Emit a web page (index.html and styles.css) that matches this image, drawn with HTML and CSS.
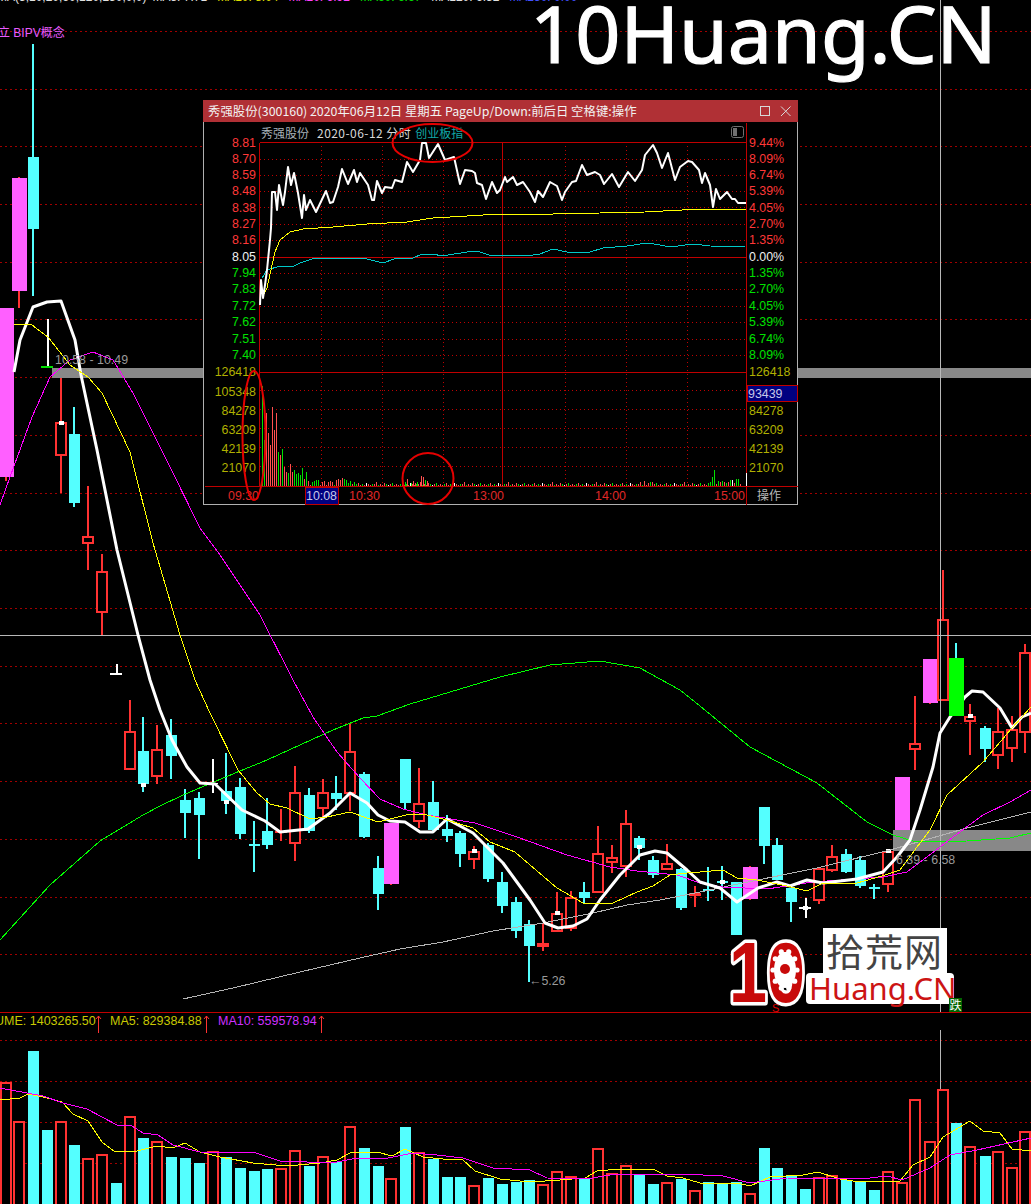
FILE: index.html
```html
<!DOCTYPE html>
<html lang="zh-CN">
<head>
<meta charset="utf-8">
<title>10Huang.CN K线</title>
<link rel="stylesheet" href="styles.css">
</head>
<body>
<main class="stage">
  <svg id="main" class="chart" viewBox="0 0 1031 1204" width="1031" height="1204">
    <g id="mainGrid"></g>
    <rect class="band" x="52" y="368" width="979" height="10"></rect>
    <g id="candlesA"></g>
    <rect class="band" x="893" y="830" width="138" height="21"></rect>
    <line class="cross" x1="0" y1="635.5" x2="1031" y2="635.5"></line>
    <line class="cross" x1="940.5" y1="0" x2="940.5" y2="1012"></line>
    <line class="cross" x1="940.5" y1="1030" x2="940.5" y2="1204"></line>
    <g id="lines"></g>
    <g id="candlesB"></g>
    <g id="volBars"></g>
    <g id="volLines"></g>
    <line class="divider" x1="0" y1="1012.5" x2="1031" y2="1012.5"></line>

    <text class="t-top" x="-3" y="1"><tspan class="tc-w">MA(5,10,20,60,120,250,0,0)</tspan><tspan class="tc-w" dx="6">MA5: 7.71</tspan><tspan class="tc-y" dx="10">MA10: 8.04</tspan><tspan class="tc-m" dx="10">MA20: 6.92</tspan><tspan class="tc-g" dx="10">MA60: 6.67</tspan><tspan class="tc-w" dx="10">MA120: 6.52</tspan><tspan class="tc-b" dx="10">MA250: 0.00</tspan></text>
    <text class="t-concept" x="-2" y="37">立 BIPV概念</text>
    <text class="t-note" x="55" y="364">10.58 - 10.49</text>
    <text class="t-note" x="896" y="864">6.39 - 6.58</text>
    <text class="t-note" x="529" y="985">←5.26</text>

    <text class="t-vol tc-ol" x="-5" y="1025">UME: 1403265.50</text>
    <text class="t-vol tc-ol" x="110" y="1025">MA5: 829384.88</text>
    <text class="t-vol tc-p" x="218" y="1025">MA10: 559578.94</text>
    <path class="arrow" d="M98.5 1033V1016M96 1019l2.5-3 2.5 3M206.5 1033V1016M204 1019l2.5-3 2.5 3M321.5 1033V1016M319 1019l2.5-3 2.5 3"></path>

    <text class="logo-s" x="772" y="1012">S</text>
    <g class="logo">
      <rect class="logo-bg" x="823" y="928" width="124" height="46"></rect>
      <rect class="logo-bg" x="806" y="973" width="148" height="31" rx="4"></rect>
      <text class="logo-en" x="809" y="1000">Huang.CN</text>
      <text class="logo-cn" x="826" y="966">拾荒网</text>
      <text class="logo-ten" x="729" y="1002" textLength="76" lengthAdjust="spacingAndGlyphs">10</text>
      <ellipse class="gear-bg" cx="785" cy="970" rx="11" ry="18"></ellipse>
      <g id="gear"></g>
      <circle class="gear-dot" cx="785" cy="969" r="5"></circle>
    </g>
    <rect class="fall-bg" x="949" y="998" width="13" height="14"></rect>
    <text class="fall" x="949.5" y="1010">跌</text>
  </svg>

  <div class="brand">10Huang.CN</div>

  <section class="popup">
    <header class="popup-title">
      <span class="popup-title-text">秀强股份(300160) 2020年06月12日 星期五 PageUp/Down:前后日 空格键:操作</span>
      <svg class="win-btns" width="34" height="12" viewBox="0 0 34 12">
        <rect x="0.5" y="1.5" width="9" height="9"></rect>
        <path d="M21 1.5l9.500 9.500M30.500 1.500L21 11"></path>
      </svg>
    </header>
    <div class="popup-body">
      <div class="popup-head">
        <span class="ph-name">秀强股份</span>
        <span class="ph-date">2020-06-12 分时</span>
        <span class="ph-index">创业板指</span>
        <svg class="ph-icon" width="13" height="12" viewBox="0 0 13 12">
          <rect x="0.500" y="0.500" width="12" height="11" rx="2"></rect>
          <rect class="ph-icon-fill" x="2" y="2" width="4" height="8"></rect>
        </svg>
      </div>
      <svg id="mini" class="mini" viewBox="204 142 593 362" width="593" height="362">
        <g id="miniGrid"></g>
        <g id="miniVol"></g>
        <g id="miniLines"></g>
        <rect class="tag-bg" x="747" y="385" width="50" height="16"></rect>
        <rect class="tag-bg" x="305" y="487" width="33" height="17"></rect>
        <g id="miniLabels"></g>
        <text class="m-l tc-vol-sel" x="748" y="397.500">93439</text>
        <text class="m-l tc-sel" x="306" y="499.500">10:08</text>
        <text class="m-l tc-time" x="228" y="499.500">09:30</text>
        <text class="m-l tc-time" x="349" y="499.500">10:30</text>
        <text class="m-l tc-time" x="473" y="499.500">13:00</text>
        <text class="m-l tc-time" x="595" y="499.500">14:00</text>
        <text class="m-l tc-time" x="714" y="499.500">15:00</text>
        <text class="m-l m-cn tc-op" x="757" y="499.500">操作</text>
        <ellipse class="mark" cx="432.500" cy="143" rx="40" ry="19"></ellipse>
        <ellipse class="mark" cx="254" cy="435.500" rx="11.500" ry="64.500"></ellipse>
        <circle class="mark" cx="428" cy="478.500" r="25.500"></circle>
      </svg>
    </div>
  </section>
</main>
<script src="chart.js"></script>
</body>
</html>
```
FILE: styles.css
```css
* { box-sizing: border-box; }
html, body { margin: 0; background: #000; }
body { font-family: "Liberation Sans", "Noto Sans CJK SC", sans-serif; }

.stage { position: relative; width: 1031px; height: 1204px; overflow: hidden; background: #000; }
.chart { display: block; }

.grid { stroke: #a00000; stroke-width: 1; stroke-dasharray: 2 3; shape-rendering: crispEdges; }
.band { fill: #888; shape-rendering: crispEdges; }
.cross { stroke: #b8b8b8; stroke-width: 1; shape-rendering: crispEdges; }
.divider { stroke: #c00000; stroke-width: 1; shape-rendering: crispEdges; }

.up-wick { fill: #ff3232; shape-rendering: crispEdges; }
.up-body { fill: #000; stroke: #ff3232; stroke-width: 2; shape-rendering: crispEdges; }
.up-solid { fill: #ff3232; shape-rendering: crispEdges; }
.dn { fill: #54ffff; shape-rendering: crispEdges; }
.mg { fill: #ff5fff; shape-rendering: crispEdges; }
.gn { fill: #00ff00; shape-rendering: crispEdges; }
.wt { fill: #fff; shape-rendering: crispEdges; }
.gtick { fill: #00e000; shape-rendering: crispEdges; }

.ln { fill: none; stroke-linejoin: round; }
.ln-thin { stroke-width: 1; shape-rendering: crispEdges; }
.ln-white { stroke: #fff; stroke-width: 3; }
.ln-yellow { stroke: #ffff00; }
.ln-mag { stroke: #ff00ff; }
.ln-green { stroke: #00ff00; }
.ln-gray { stroke: #b4b4b4; }
.ln-cyan { stroke: #00c8c8; }
.ln-price { stroke: #fff; stroke-width: 2; }

.t-top { font-size: 12px; }
.t-concept { font-size: 12px; fill: #e85cff; font-family: "Liberation Sans", "Noto Sans CJK SC", sans-serif; }
.t-note { font-size: 12.400px; fill: #9a9a9a; }
.t-vol { font-size: 12.500px; }
.tc-w { fill: #e0e0e0; }
.tc-y { fill: #e0e000; }
.tc-m { fill: #ff40ff; }
.tc-g { fill: #00e000; }
.tc-b { fill: #4050ff; }
.tc-ol { fill: #c8c800; }
.tc-p { fill: #d030ff; }
.arrow { fill: none; stroke: #ff3232; stroke-width: 1; }

.logo-bg { fill: #fff; }
.logo-ten { font-family: "Liberation Sans", sans-serif; font-weight: 700; font-size: 86px; fill: #c80a0a; stroke: #fff; stroke-width: 7; paint-order: stroke; stroke-linejoin: round; }
.gear-bg { fill: #fff; }
.gear-tooth { fill: #fff; }
.gear-dot { fill: #c80a0a; }
.logo-cn { font-family: "Noto Sans CJK SC", sans-serif; font-size: 38px; fill: #444; letter-spacing: 1px; }
.logo-en { font-family: "Noto Sans", sans-serif; font-size: 31px; fill: #cc1414; }
.logo-s { font-size: 11px; fill: #e00000; }
.fall-bg { fill: #006400; shape-rendering: crispEdges; }
.fall { font-family: "Noto Sans CJK SC", sans-serif; font-size: 12px; fill: #fff; }

.brand {
  position: absolute; left: 530px; top: -23px;
  font-family: "Noto Sans", sans-serif; font-size: 79px; line-height: 112px;
  color: #fff; white-space: nowrap; -webkit-text-stroke: 1.200px #fff;
}

.popup { position: absolute; left: 203px; top: 100px; width: 595px; height: 405px; display: flex; flex-direction: column; background: #000; }
.popup-title { display: flex; align-items: center; justify-content: space-between; height: 22px; padding: 0 4px 0 5px; background: #b03035; }
.popup-title-text { font-family: "Noto Sans CJK SC", sans-serif; font-size: 12.400px; color: #f2f2f2; white-space: nowrap; }
.win-btns { display: block; }
.win-btns rect { fill: none; stroke: #d8d8d8; }
.win-btns path { fill: none; stroke: #d8d8d8; }
.popup-body { flex: 1; display: flex; flex-direction: column; border: 1px solid #b0b0b0; border-top: 0; }
.popup-head { display: flex; align-items: center; gap: 4px; height: 20px; padding-left: 57px; padding-right: 53px; font-family: "Noto Sans CJK SC", sans-serif; font-size: 12px; white-space: nowrap; }
.ph-name { color: #a8b0b8; margin-right: 4px; }
.ph-date { color: #d8d8d8; letter-spacing: 0.450px; }
.ph-index { color: #10a8a8; }
.ph-icon { margin-left: auto; }
.ph-icon rect { fill: none; stroke: #707070; }
.ph-icon .ph-icon-fill { fill: #707070; stroke: none; }
.mini { display: block; overflow: visible; }

.m-frame { stroke: #c00000; stroke-width: 1; shape-rendering: crispEdges; }
.m-dot { stroke: #c00000; stroke-width: 1; stroke-dasharray: 1 3; shape-rendering: crispEdges; }
.m-l { font-size: 12.400px; }
.m-cn { font-family: "Noto Sans CJK SC", sans-serif; font-size: 12px; }
.m-red { fill: #ff3838; }
.m-green { fill: #00e000; }
.m-white { fill: #f0f0f0; }
.m-ol { fill: #b0b000; }
.tc-sel, .tc-vol-sel { fill: #c8c8e8; }
.tc-time { fill: #e02828; }
.tc-op { fill: #b8b8b8; }
.tag-bg { fill: #000080; stroke: #c00000; stroke-width: 1; shape-rendering: crispEdges; }
.vr { stroke: #ff5050; stroke-width: 1; shape-rendering: crispEdges; }
.vg { stroke: #00e000; stroke-width: 1; shape-rendering: crispEdges; }
.vw { stroke: #fff; stroke-width: 1; shape-rendering: crispEdges; }
.mark { fill: none; stroke: #e60000; stroke-width: 2; }
```
FILE: chart.js
```javascript
var NS = "http://www.w3.org/2000/svg";
function el(parent, tag, attrs) {
  var n = document.createElementNS(NS, tag);
  for (var k in attrs) n.setAttribute(k, attrs[k]);
  parent.appendChild(n);
  return n;
}
function box(g, cls, x, y, w, h) { el(g, "rect", { "class": cls, x: x, y: y, width: w, height: h }); }
function poly(g, cls, pts) {
  el(g, "polyline", { "class": "ln " + cls, points: pts.map(function (p) { return p[0] + "," + p[1]; }).join(" ") });
}
function $(id) { return document.getElementById(id); }

/* main grid */
[31,89,146,204,262,319,377,435,493,550,608,666,723,781,839,897,954,1040,1081,1122,1163].forEach(function (y) {
  el($("mainGrid"), "line", { "class": "grid", x1: 0, x2: 1031, y1: y + 0.5, y2: y + 0.5 });
});

/* candles: x, wickTop, wickBottom, bodyTop, bodyBottom, type, whiteSquareY */
var candles = [
 [6,308,481,308,477,"m"],[19,177,308,178,291,"m"],[33,44,296,157,229,"c"],
 [47,319,367,366,368,"w"],[61,378,493,422,455,"r",423],[74,407,507,434,503,"c"],
 [88,486,570,536,543,"r"],[102,554,635,571,612,"r"],[116,664,674,673,675,"w"],
 [130,700,770,731,769,"r"],[143,717,792,751,784,"c",785],[157,725,784,749,776,"r"],
 [171,719,779,735,756,"c"],[185,789,838,800,813,"c"],[199,792,859,798,815,"c"],
 [212,759,793,783,784,"w"],[226,753,814,791,801,"c",802],[240,778,839,787,834,"c"],
 [254,821,872,844,846,"c"],[267,798,849,831,845,"c"],[281,809,841,831,833,"R"],
 [295,766,861,792,843,"r"],[309,788,833,795,831,"c"],[323,779,818,792,808,"r"],
 [336,776,810,793,799,"c"],[350,724,811,751,793,"r"],[364,772,838,774,837,"c"],
 [378,856,910,868,894,"c"],[391,823,885,823,884,"m"],[405,759,810,759,803,"c"],
 [419,768,828,803,821,"r"],[433,781,832,802,830,"c"],[447,815,842,829,836,"c"],
 [460,831,867,833,854,"c"],[474,846,869,851,859,"r",851],[488,843,882,845,879,"c"],
 [502,872,913,882,906,"c"],[516,897,938,902,931,"c"],[529,920,982,924,946,"c"],
 [543,923,951,943,947,"R"],[557,892,932,913,931,"r",913],[571,891,931,897,928,"r"],
 [584,882,904,892,898,"c"],[598,826,893,853,892,"r"],[612,845,873,857,862,"r"],
 [626,810,877,823,866,"r"],[639,836,860,838,848,"c",847],[653,856,878,860,875,"c"],
 [667,844,870,863,869,"r"],[681,868,910,869,908,"c"],[695,886,907,893,896,"R"],
 [708,867,901,889,891,"c"],[722,866,900,881,883,"c",882],[736,882,935,882,935,"c"],
 [750,866,900,867,899,"m"],[764,807,864,807,846,"c"],[777,838,880,845,880,"c"],
 [791,888,922,888,902,"c"],[805,898,918,907,909,"w",908],[819,868,904,868,900,"r"],
 [832,845,872,856,870,"r"],[846,849,873,854,872,"c"],[860,856,888,860,886,"c"],
 [874,884,899,887,889,"c"],[888,850,892,851,884,"r",851],[902,777,851,777,851,"m"],
 [915,696,770,743,749,"r"],[930,659,704,659,703,"m"],[943,570,700,619,700,"r"],
 [970,704,755,716,721,"r",716],[985,726,762,728,749,"c"],[998,708,769,731,755,"r"],
 [1012,716,762,729,748,"r"],[1025,644,753,652,732,"r"]
];
function candle(g, c) {
  var x = c[0], t = c[5];
  if (t === "r") {
    box(g, "up-wick", x - 1, c[1], 2, c[3] - c[1]);
    box(g, "up-wick", x - 1, c[4], 2, c[2] - c[4]);
    box(g, "up-body", x - 5, c[3] + 1, 10, c[4] - c[3] - 1);
  } else if (t === "R") {
    box(g, "up-wick", x - 1, c[1], 2, c[2] - c[1]);
    box(g, "up-solid", x - 6, c[3], 12, c[4] - c[3]);
  } else if (t === "m") {
    box(g, "up-wick", x - 1, c[1], 2, c[2] - c[1]);
    box(g, "mg", x - 7, c[3], 15, c[4] - c[3]);
  } else if (t === "w") {
    box(g, "wt", x - 0.5, c[1], 2, c[2] - c[1]);
    box(g, c[0] === 47 ? "gtick" : "wt", x - 6, c[3], 12, c[4] - c[3]);
  } else {
    box(g, "dn", x - 1, c[1], 2, c[2] - c[1]);
    box(g, "dn", x - 5.5, c[3], 11, c[4] - c[3]);
  }
  if (c[6]) box(g, "wt", x - 2.5, c[6] - 2, 5, 4);
}
candles.forEach(function (c) { candle($("candlesA"), c); });
box($("candlesB"), "dn", 955, 643, 2, 16);
box($("candlesB"), "gn", 949, 658, 15, 58);

/* moving averages */
var ma5 = [[14,372],[20,340],[33,307],[47,302],[61,301],[75,340],[81,375],[97,450],[117,550],[138,635],[150,680],[160,710],[172,740],[187,767],[200,783],[215,784],[242,810],[265,821],[280,832],[308,829],[330,813],[350,793],[367,803],[378,815],[390,821],[405,822],[420,832],[433,832],[447,819],[473,833],[503,863],[530,900],[545,923],[558,928],[573,926],[587,919],[600,900],[620,875],[640,855],[655,851],[667,853],[687,870],[700,882],[720,888],[737,902],[743,898],[758,888],[777,882],[790,886],[807,880],[823,883],[857,879],[883,872],[897,857],[910,840],[920,810],[933,767],[940,733],[950,717],[965,697],[972,691],[983,692],[1000,708],[1012,728],[1022,717],[1031,713]];
var ma10 = [[14,324],[32,325],[48,337],[70,365],[88,377],[102,393],[130,452],[153,543],[180,635],[195,680],[210,713],[238,770],[257,793],[270,804],[287,808],[310,819],[327,817],[350,812],[378,822],[390,819],[410,814],[427,815],[447,820],[473,828],[490,842],[515,852],[530,865],[557,888],[583,903],[613,903],[637,892],[653,886],[670,875],[687,873],[700,872],[723,870],[737,878],[757,880],[767,882],[787,886],[807,891],[823,883],[857,883],[882,876],[900,870],[917,847],[930,830],[947,795],[983,762],[1012,728],[1031,707]];
var ma20 = [[0,505],[10,477],[32,417],[50,377],[70,360],[93,352],[113,360],[133,393],[170,467],[200,528],[220,555],[260,615],[293,680],[313,717],[337,752],[360,778],[380,799],[403,809],[427,815],[475,823],[517,837],[567,855],[610,867],[637,871],[677,875],[700,883],[723,887],[767,889],[813,882],[883,877],[907,872],[927,857],[953,837],[983,815],[1010,802],[1031,790]];
var ma60 = [[0,940],[50,885],[100,841],[143,815],[160,806],[183,795],[240,771],[267,760],[300,745],[333,730],[363,718],[377,716],[410,704],[450,692],[500,677],[550,665],[600,661],[640,668],[680,690],[700,706],[750,747],[817,783],[867,822],[893,835],[913,841],[933,842],[967,841],[1010,838],[1031,833]];
var ma120 = [[183,999],[233,988],[300,972],[360,958],[400,949],[443,942],[493,931],[543,923],[593,913],[627,905],[660,900],[710,890],[733,885],[817,868],[890,850],[967,828],[1031,812]];
var L = $("lines");
poly(L, "ln-thin ln-gray", ma120);
poly(L, "ln-thin ln-green", ma60);
poly(L, "ln-thin ln-mag", ma20);
poly(L, "ln-white", ma5);
poly(L, "ln-thin ln-yellow", ma10);

/* volume bars: x, top */
var vols = [[6,1082,"r"],[19,1121,"r"],[33,1051,"c"],[47,1130,"c"],[61,1121,"r"],[74,1145,"c"],[88,1158,"r"],[102,1154,"r"],[116,1183,"c"],[130,1116,"r"],[143,1138,"c"],[157,1141,"r"],[171,1157,"c"],[185,1158,"c"],[199,1163,"c"],[213,1151,"r"],[226,1157,"c"],[240,1168,"c"],[254,1171,"c"],[267,1169,"c"],[281,1168,"r"],[295,1150,"r"],[309,1166,"c"],[323,1156,"r"],[336,1162,"c"],[350,1126,"r"],[364,1148,"c"],[378,1166,"c"],[391,1178,"r"],[405,1127,"c"],[419,1152,"r"],[433,1159,"c"],[447,1177,"c"],[460,1177,"c"],[474,1185,"r"],[488,1178,"c"],[502,1184,"c"],[516,1182,"c"],[529,1180,"c"],[543,1184,"r"],[557,1171,"r"],[571,1176,"r"],[584,1179,"c"],[598,1148,"r"],[612,1173,"r"],[626,1165,"r"],[639,1175,"c"],[653,1184,"c"],[667,1182,"r"],[681,1179,"c"],[695,1190,"r"],[708,1182,"c"],[722,1183,"c"],[736,1182,"c"],[750,1193,"r"],[764,1148,"c"],[777,1168,"c"],[791,1176,"c"],[805,1189,"c"],[819,1177,"r"],[832,1175,"r"],[846,1180,"c"],[860,1182,"c"],[874,1190,"c"],[888,1171,"r"],[902,1182,"r"],[915,1099,"r"],[930,1141,"r"],[943,1089,"r"],[956,1123,"c"],[970,1146,"r"],[985,1156,"c"],[998,1151,"r"],[1012,1167,"r"],[1025,1131,"r"]];
vols.forEach(function (v) {
  if (v[2] === "r") box($("volBars"), "up-body", v[0] - 5, v[1] + 1, 10, 1210 - v[1]);
  else box($("volBars"), "dn", v[0] - 5.5, v[1], 11, 1204 - v[1]);
});
var vy = [[0,1100],[20,1098],[28,1094],[43,1097],[62,1102],[73,1114],[88,1121],[102,1142],[115,1152],[137,1151],[157,1146],[173,1148],[185,1143],[200,1152],[220,1157],[253,1163],[287,1166],[320,1163],[337,1160],[350,1153],[377,1152],[392,1156],[405,1149],[423,1157],[443,1159],[462,1159],[475,1171],[500,1179],[530,1182],[560,1180],[585,1178],[597,1171],[620,1169],[653,1169],[667,1176],[683,1178],[700,1183],[737,1183],[750,1186],[770,1177],[803,1175],[818,1172],[840,1179],[853,1181],[900,1181],[913,1165],[930,1157],[943,1137],[970,1121],[983,1131],[1000,1133],[1012,1149],[1031,1151]];
var vm = [[0,1088],[27,1093],[43,1096],[63,1103],[87,1109],[117,1125],[132,1126],[143,1133],[158,1135],[173,1145],[200,1152],[233,1153],[253,1152],[280,1161],[307,1162],[337,1162],[357,1158],[383,1159],[413,1153],[437,1155],[463,1158],[493,1168],[530,1170],[547,1178],[587,1179],[610,1175],[633,1174],[683,1174],[723,1176],[750,1183],[787,1178],[843,1179],[870,1178],[887,1176],[902,1180],[930,1168],[950,1155],[977,1150],[1031,1138]];
poly($("volLines"), "ln-thin ln-yellow", vy);
poly($("volLines"), "ln-thin ln-mag", vm);

/* logo gear teeth */
for (var a = 0; a < 10; a++) {
  var r = a * Math.PI / 5;
  el($("gear"), "circle", { "class": "gear-tooth", cx: 785 + 12 * Math.cos(r), cy: 970 + 19 * Math.sin(r), r: 2.6 });
}

/* intraday window */
var G = $("miniGrid");
[159,175,191,207,224,240,273,289,306,322,339,355,390,409,428,447,466].forEach(function (y) {
  el(G, "line", { "class": "m-dot", x1: 260, x2: 746, y1: y + 0.5, y2: y + 0.5 });
});
[321,382,443,565,626,687].forEach(function (x) {
  el(G, "line", { "class": "m-dot", x1: x + 0.5, x2: x + 0.5, y1: 142, y2: 486 });
});
[[259,142,746,142],[259,257,746,257],[259,372,746,372],[204,486,797,486],[259,142,259,486],[502,142,502,486],[746,122,746,504]].forEach(function (s) {
  el(G, "line", { "class": "m-frame", x1: s[0] + 0.5, y1: s[1] + 0.5, x2: s[2] + 0.5, y2: s[3] + 0.5 });
});

var price = [[260,305],[261,280],[263,298],[265,285],[267,270],[268,260],[270,240],[271,228],[272,192],[275,192],[277,210],[279,185],[283,205],[285,192],[288,167],[291,185],[294,173],[298,193],[302,218],[304,195],[306,210],[310,200],[316,212],[326,191],[330,203],[333,202],[338,187],[342,169],[348,184],[354,170],[357,182],[360,173],[368,185],[372,200],[374,200],[377,181],[382,193],[385,187],[392,188],[395,180],[402,182],[407,162],[413,172],[420,160],[422,143],[426,143],[429,158],[438,144],[445,160],[454,157],[460,184],[465,170],[472,171],[475,173],[477,183],[482,185],[486,199],[492,182],[497,193],[500,190],[505,177],[507,182],[513,177],[517,185],[523,182],[530,192],[535,202],[538,191],[543,197],[550,182],[557,186],[562,200],[565,192],[572,182],[576,181],[582,165],[587,175],[595,172],[600,175],[604,184],[612,174],[619,187],[628,172],[635,181],[642,170],[645,155],[653,145],[657,153],[662,168],[668,153],[675,180],[680,167],[688,161],[692,162],[699,170],[702,183],[705,173],[710,185],[713,207],[716,189],[720,199],[727,192],[732,199],[735,199],[738,203],[746,203]];
var avg = [[262,298],[267,288],[275,252],[280,240],[290,232],[303,229],[333,227],[367,224],[407,222],[433,218],[467,216],[500,214],[553,214],[600,213],[645,212],[682,210],[710,209],[746,209]];
var idx = [[262,278],[267,270],[280,266],[292,267],[300,263],[315,258],[330,258],[337,259],[350,258],[363,258],[383,263],[397,258],[413,258],[422,254],[433,254],[442,256],[467,252],[477,251],[492,256],[500,255],[513,255],[527,256],[540,254],[553,249],[567,252],[590,252],[603,248],[627,246],[647,243],[660,245],[670,247],[693,244],[710,246],[745,247]];

/* per-minute volume: tall opening prints, then a low tape */
var early = [[262,386,"g"],[264,440,"g"],[266,413,"r"],[268,433,"r"],[270,445,"r"],[272,407,"r"],[274,430,"r"],[276,413,"r"],[278,452,"g"],[280,455,"r"],[282,449,"g"],[284,467,"r"],[286,472,"r"],[288,473,"g"],[290,464,"r"],[292,472,"r"],[294,470,"g"],[296,474,"g"],[298,473,"g"],[300,475,"g"],[302,468,"g"],[304,479,"r"],[306,472,"g"]];
var V = $("miniVol");
function tick(x, top, t) {
  el(V, "line", { "class": t === "r" ? "vr" : t === "g" ? "vg" : "vw", x1: x + 0.5, x2: x + 0.5, y1: top, y2: 486 });
}
early.forEach(function (e) { tick(e[0], e[1], e[2]); });
var pat = [2,1,2,3,1,2,1,3,2,1,2,2,4,1,2,1,3,2,1,2,3,1];
var col = "rrgrrgrwrrgrrgrrrgwrgr";
for (var i = 0, x = 308; x < 708; x += 2, i++) {
  tick(x, 486 - pat[i % pat.length], col.charAt(i % col.length));
}
[[308,481,"r"],[312,482,"g"],[314,481,"g"],[316,480,"g"],[318,480,"g"],[322,482,"r"],[324,481,"r"],[328,482,"r"],[330,481,"r"],[332,482,"r"],[336,480,"r"],[338,479,"r"],[340,480,"r"],[342,478,"r"],[344,479,"g"],[346,480,"g"],[350,481,"g"],[354,482,"g"]].forEach(function (p) { tick(p[0], p[1], p[2]); });
[[421,476,"r"],[423,477,"r"],[425,480,"g"],[427,481,"r"],[413,481,"r"],[417,482,"g"],[407,479,"r"],[405,482,"g"],[411,483,"g"],[415,483,"r"],[644,481,"r"],[650,482,"g"],[652,482,"r"]].forEach(function (p) { tick(p[0], p[1], p[2]); });
[[708,483,"g"],[710,482,"g"],[712,477,"g"],[714,470,"g"],[716,484,"r"],[718,481,"g"],[720,482,"r"],[722,481,"g"],[724,482,"r"],[726,483,"g"],[728,482,"r"],[730,480,"g"],[732,480,"w"],[734,483,"r"],[736,479,"g"],[738,479,"g"],[740,484,"r"],[746,473,"w"]].forEach(function (p) { tick(p[0], p[1], p[2]); });

var M = $("miniLines");
poly(M, "ln-thin ln-cyan", idx);
poly(M, "ln-thin ln-yellow", avg);
poly(M, "ln-price", price);

/* axis labels */
var rows = [
 ["8.81","9.44%",147,"m-red"],["8.70","8.09%",163,"m-red"],["8.59","6.74%",179,"m-red"],["8.48","5.39%",195,"m-red"],
 ["8.38","4.05%",212,"m-red"],["8.27","2.70%",228,"m-red"],["8.16","1.35%",244,"m-red"],["8.05","0.00%",261,"m-white"],
 ["7.94","1.35%",277,"m-green"],["7.83","2.70%",293,"m-green"],["7.72","4.05%",310,"m-green"],["7.62","5.39%",326,"m-green"],
 ["7.51","6.74%",343,"m-green"],["7.40","8.09%",359,"m-green"],
 ["126418","126418",376,"m-ol"],["105348","",396,"m-ol"],["84278","84278",415,"m-ol"],["63209","63209",434,"m-ol"],
 ["42139","42139",453,"m-ol"],["21070","21070",472,"m-ol"]
];
var ML = $("miniLabels");
rows.forEach(function (r) {
  var a = el(ML, "text", { "class": "m-l " + r[3], x: 256, y: r[2], "text-anchor": "end" });
  a.textContent = r[0];
  if (r[1]) {
    var b = el(ML, "text", { "class": "m-l " + r[3], x: 749, y: r[2] });
    b.textContent = r[1];
  }
});
```
